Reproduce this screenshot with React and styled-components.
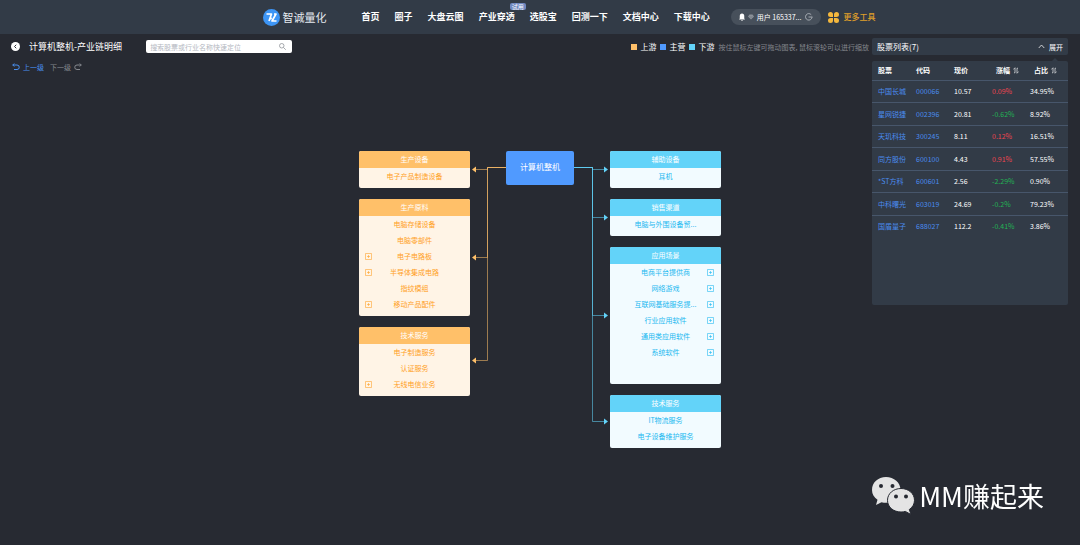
import React, { useState } from "react";
import styled, { createGlobalStyle } from "styled-components";

const GlobalStyle = createGlobalStyle`
  * {
    box-sizing: border-box;
  }

  body {
    margin: 0;
    background: #272a32;
    color: #fff;
    font-family: "Noto Sans CJK SC", sans-serif;
    font-size: 7px;
    line-height: 10px;
  }

  button,
  input {
    margin: 0;
    padding: 0;
    border: 0;
    background: none;
    color: inherit;
    font: inherit;
  }

  button {
    cursor: pointer;
  }

  a {
    color: inherit;
    text-decoration: none;
  }

  svg {
    display: block;
    flex: none;
  }
`;

const Header = styled.header`
  display: flex;
  align-items: center;
  justify-content: center;
  height: 34px;
  padding-left: 58px;
  background: #323b47;
  white-space: nowrap;
`;

const Logo = styled.a`
  display: flex;
  align-items: center;
  gap: 3px;
  margin-right: 35px;
  color: #e6eaf0;
  font-size: 11px;
  line-height: 16px;
`;

const Nav = styled.nav`
  display: flex;
  gap: 15px;
  margin-right: 21px;
`;

const NavLink = styled.a`
  position: relative;
  font-size: 9px;
  font-weight: 700;
  line-height: 14px;
`;

const Badge = styled.span`
  position: absolute;
  top: -7px;
  right: -11px;
  padding: 0 2px;
  border-radius: 2px;
  background: #7088c0;
  font-size: 6px;
  font-weight: 400;
  line-height: 7px;
`;

const UserPill = styled.button`
  display: flex;
  align-items: center;
  gap: 3px;
  height: 16px;
  padding: 0 8px;
  border-radius: 8px;
  background: #47505b;
`;

const UserName = styled.span`
  margin-right: 1px;
`;

const MoreTools = styled.a`
  display: flex;
  align-items: center;
  gap: 4px;
  margin-left: 7px;
  color: #e0a02a;
  font-size: 8px;
  font-weight: 500;
`;

const Toolbar = styled.div`
  display: flex;
  align-items: center;
  padding: 4px 12px 0 11px;
  white-space: nowrap;
`;

const BackButton = styled.button`
  width: 9px;
  height: 9px;
  border-radius: 50%;
  background: #fff;
`;

const Title = styled.h1`
  margin: 0 24px 0 9px;
  font-size: 9px;
  font-weight: 400;
  line-height: 14px;
`;

const SearchBox = styled.label`
  display: flex;
  align-items: center;
  width: 146px;
  height: 13px;
  padding: 0 6px 0 4px;
  border-radius: 2px;
  background: #fff;
`;

const SearchInput = styled.input`
  flex: 1;
  min-width: 0;
  height: 11px;
  outline: none;
  color: #333;

  &::placeholder {
    color: #b4b8bf;
    opacity: 1;
  }
`;

const Legend = styled.div`
  display: flex;
  align-items: center;
  gap: 4px;
  margin: 0 3px 0 auto;
`;

const LegendItem = styled.span`
  display: flex;
  align-items: center;
  gap: 3px;
  font-size: 8px;

  &::before {
    content: "";
    width: 6px;
    height: 6px;
    background: ${(props) => props.$color};
  }
`;

const Hint = styled.span`
  color: #83868c;
`;

const PanelHead = styled.div`
  display: flex;
  align-items: center;
  justify-content: space-between;
  width: 196px;
  height: 17px;
  padding: 0 5px;
  border-radius: 2px;
  background: #323b47;
`;

const PanelTitle = styled.h2`
  margin: 0;
  font-size: 8px;
  font-weight: 400;
`;

const ExpandButton = styled.button`
  display: flex;
  align-items: center;
  gap: 4px;
`;

const Workspace = styled.main`
  display: grid;
  grid-template-columns: 1fr auto 1fr;
  align-items: start;
  padding: 6px 12px 0;
`;

const History = styled.div`
  display: flex;
  gap: 6px;
`;

const HistoryButton = styled.button`
  display: flex;
  align-items: center;
  gap: 3px;
  height: 12px;
  color: ${(props) => (props.$active ? "#4a90f0" : "#85888e")};
`;

const Diagram = styled.div`
  display: flex;
  align-items: flex-start;
  margin-top: 90px;
`;

const Column = styled.div`
  display: flex;
  flex-direction: column;
  gap: 11px;
  width: 111px;
`;

const RootNode = styled.div`
  width: 68px;
  padding-bottom: 2px;
  border-radius: 2px;
  background: #509aff;
  font-size: 8px;
  line-height: 32px;
  text-align: center;
`;

const Card = styled.section`
  min-height: ${(props) => (props.$tall ? "137px" : "0")};
  border-radius: 2px;
  overflow: hidden;
  background: ${(props) => props.$tone.body};
  color: ${(props) => props.$tone.text};
`;

const CardTitle = styled.h3`
  margin: 0;
  background: ${(props) => props.$tone.main};
  color: #fff;
  font-size: 7px;
  font-weight: 400;
  line-height: 17px;
  text-align: center;
`;

const CardList = styled.ul`
  margin: 0;
  padding: 0 6px 4px;
  list-style: none;
`;

const CardItem = styled.li`
  display: grid;
  grid-template-columns: 8px 1fr 8px;
  align-items: center;
  height: 16px;
  text-align: center;
`;

const PlusButton = styled.button`
  grid-row: 1;
  grid-column: ${(props) => (props.$side === "left" ? 1 : 3)};
  height: 7px;
`;

const ItemName = styled.span`
  grid-row: 1;
  grid-column: 2;
`;

const StockPanel = styled.aside`
  position: relative;
  justify-self: end;
  width: 196px;
  min-height: 244px;
  border-radius: 2px;
  background: #323b47;

  &::before {
    content: "";
    position: absolute;
    top: -3px;
    right: 10px;
    border: 3px solid transparent;
    border-top: 0;
    border-bottom-color: #323b47;
  }
`;

const StockTable = styled.table`
  width: 100%;
  border-collapse: collapse;
  table-layout: fixed;
`;

const StockRow = styled.tr`
  height: 22px;
  border-top: 1px solid #47566b;

  &:nth-child(even) {
    height: 23px;
  }
`;

const Th = styled.th`
  width: ${(props) => (props.$last ? "auto" : "38px")};
  height: 19px;
  padding: 0 0 0 ${(props) => (props.$sortable ? "10px" : "6px")};
  font-weight: 700;
  text-align: left;
  white-space: nowrap;
`;

const SortButton = styled.button`
  display: flex;
  align-items: center;
  gap: 3px;
`;

const Td = styled.td`
  padding: 0 0 0 6px;
  color: ${(props) => props.$color || "#fff"};
  white-space: nowrap;
`;

const Watermark = styled.div`
  position: fixed;
  right: 36px;
  bottom: 30px;
  display: flex;
  align-items: center;
  gap: 4px;
  font-size: 27px;
  line-height: 38px;
`;

const orange = { main: "#ffc069", body: "#fff4e6", text: "#ffa024" };
const cyan = { main: "#63d3f9", body: "#f2fbff", text: "#1ab8f0" };

const navItems = [
  { name: "首页" },
  { name: "圈子" },
  { name: "大盘云图" },
  { name: "产业穿透", badge: "试用" },
  { name: "选股宝" },
  { name: "回测一下" },
  { name: "文档中心" },
  { name: "下载中心" },
];

const upstream = [
  { title: "生产设备", items: [["电子产品制造设备"]] },
  {
    title: "生产原料",
    items: [
      ["电脑存储设备"],
      ["电脑零部件"],
      ["电子电路板", true],
      ["半导体集成电路", true],
      ["指纹模组"],
      ["移动产品配件", true],
    ],
  },
  {
    title: "技术服务",
    items: [["电子制造服务"], ["认证服务"], ["无线电信业务", true]],
  },
];

const downstream = [
  { title: "辅助设备", items: [["耳机"]] },
  { title: "销售渠道", items: [["电脑与外围设备贸..."]] },
  {
    title: "应用场景",
    tall: true,
    items: [
      ["电商平台提供商", true],
      ["网络游戏", true],
      ["互联网基础服务提...", true],
      ["行业应用软件", true],
      ["通用类应用软件", true],
      ["系统软件", true],
    ],
  },
  { title: "技术服务", items: [["IT物流服务"], ["电子设备维护服务"]] },
];

const stocks = [
  ["中国长城", "000066", "10.57", "0.09%", "34.95%"],
  ["星网锐捷", "002396", "20.81", "-0.62%", "8.92%"],
  ["天玑科技", "300245", "8.11", "0.12%", "16.51%"],
  ["同方股份", "600100", "4.43", "0.91%", "57.55%"],
  ["*ST方科", "600601", "2.56", "-2.29%", "0.90%"],
  ["中科曙光", "603019", "24.69", "-0.2%", "79.23%"],
  ["国盾量子", "688027", "112.2", "-0.41%", "3.86%"],
];

function LogoIcon() {
  return (
    <svg width="17" height="17" viewBox="0 0 34 34" fill="none">
      <circle cx="17" cy="17" r="17" fill="#3d95f5" />
      <path
        d="M7 10h10l-5 14M22 10h4l-8 14h9M17 17l-2 3"
        stroke="#fff"
        strokeWidth="3.4"
        strokeLinejoin="round"
      />
    </svg>
  );
}

function BellIcon() {
  return (
    <svg width="6" height="8" viewBox="0 0 12 16" fill="#fff">
      <path d="M6 1c3 0 4.500 2 4.500 5v5l1.500 2H0l1.500-2V6C1.500 3 3 1 6 1zM4 14h4l-2 2z" />
    </svg>
  );
}

function GemIcon() {
  return (
    <svg width="6" height="6" viewBox="0 0 12 12">
      <path d="M3 1h6l3 4-6 6-6-6z" fill="#8c929a" />
      <path d="M3.500 4.500L6 7l2.500-2.500" stroke="#5b636d" fill="none" />
    </svg>
  );
}

function LogoutIcon() {
  return (
    <svg width="8" height="8" viewBox="0 0 16 16" fill="none" stroke="#c3c7cc" strokeWidth="1.500">
      <path d="M12.500 3.500a6.500 6.500 0 1 0 1.500 5M7 8h8" />
    </svg>
  );
}

function ToolsIcon() {
  return (
    <svg width="11" height="11" viewBox="0 0 22 22" fill="#f5b83d">
      <path d="M5 0a5 5 0 0 1 5 5v5H5A5 5 0 0 1 5 0zM17 0a5 5 0 0 1 0 10h-5V5a5 5 0 0 1 5-5zM5 12h5v5a5 5 0 1 1-5-5zM12 12h5a5 5 0 1 1-5 5z" />
    </svg>
  );
}

function UndoIcon({ flip }) {
  return (
    <svg width="8" height="8" viewBox="0 0 16 16" fill="none" stroke="currentColor" strokeWidth="2">
      <g transform={flip ? "translate(16 0) scale(-1 1)" : undefined}>
        <path d="M1.500 4H10a4.500 4.500 0 0 1 0 9H4M4.500 1L1.500 4l3 3" />
      </g>
    </svg>
  );
}

function SortIcon() {
  return (
    <svg width="6" height="7" viewBox="0 0 12 14" fill="none" stroke="#d4d7db" strokeWidth="1.600">
      <path d="M0.500 5L4 1.500v10M11.500 9L8 12.500v-10M2 11.500h2M8 2.500h2" />
    </svg>
  );
}

function WechatIcon() {
  return (
    <svg width="44" height="38" viewBox="0 0 44 38">
      <path
        d="M15 0C7 0 1 5.500 1 13c0 4 2 7.500 5.500 9.800L5 28l5.500-2.800c1.500.4 3 .6 4.500.6 8 0 14.500-5.300 14.500-12.800S23 0 15 0z"
        fill="#e4e4e4"
      />
      <circle cx="10" cy="9" r="2" fill="#272a32" />
      <circle cx="21.500" cy="9" r="2" fill="#272a32" />
      <path
        d="M30 11.500c-7.500 0-13.500 5-13.500 11.800S22.500 35 30 35c1.500 0 3-.2 4.300-.6L40 37.500l-1.700-5c3.200-2.200 5.200-5.400 5.200-9.200 0-6.800-6-11.800-13.500-11.800z"
        fill="#e4e4e4"
        stroke="#272a32"
        strokeWidth="1"
      />
      <circle cx="25" cy="19.500" r="2" fill="#272a32" />
      <circle cx="35" cy="19.500" r="2" fill="#272a32" />
    </svg>
  );
}

// one line per card, all leaving the root node; they get brighter where they overlap
function Links({ side, targets }) {
  const left = side === "left";
  const color = left ? orange.main : cyan.main;
  return (
    <svg width="36" height="300" viewBox="0 0 36 300" fill="none">
      <g transform={left ? undefined : "translate(36 0) scale(-1 1)"}>
        {targets.map((y) => (
          <g key={y}>
            <path d={`M36 16.500H17.500V${y}H5`} stroke={color} strokeOpacity="0.550" />
            <path d={`M2 ${y}l4-3v6z`} fill={color} />
          </g>
        ))}
      </g>
    </svg>
  );
}

function Group({ data, tone, side }) {
  return (
    <Card $tone={tone} $tall={data.tall}>
      <CardTitle $tone={tone}>{data.title}</CardTitle>
      <CardList>
        {data.items.map(([name, more]) => (
          <CardItem key={name}>
            {more && (
              <PlusButton $side={side} aria-label={`展开${name}`}>
                <svg width="7" height="7" viewBox="0 0 14 14" fill="none" stroke="currentColor" strokeOpacity="0.800">
                  <path d="M1 1h12v12H1zM4 7h6M7 4v6" strokeWidth="1.400" />
                </svg>
              </PlusButton>
            )}
            <ItemName>{name}</ItemName>
          </CardItem>
        ))}
      </CardList>
    </Card>
  );
}

export default function App() {
  const [keyword, setKeyword] = useState("");

  return (
    <>
      <GlobalStyle />
      <Header>
        <Logo href="#">
          <LogoIcon />
          智诚量化
        </Logo>
        <Nav>
          {navItems.map((item) => (
            <NavLink href="#" key={item.name}>
              {item.name}
              {item.badge && <Badge>{item.badge}</Badge>}
            </NavLink>
          ))}
        </Nav>
        <UserPill>
          <BellIcon />
          <GemIcon />
          <UserName>用户 165337...</UserName>
          <LogoutIcon />
        </UserPill>
        <MoreTools href="#">
          <ToolsIcon />
          更多工具
        </MoreTools>
      </Header>

      <Toolbar>
        <BackButton aria-label="返回">
          <svg width="9" height="9" viewBox="0 0 18 18" fill="none" stroke="#272a32" strokeWidth="2">
            <path d="M10.500 5.500L7 9l3.500 3.500" />
          </svg>
        </BackButton>
        <Title>计算机整机-产业链明细</Title>
        <SearchBox>
          <SearchInput
            aria-label="搜索"
            placeholder="搜索股票或行业名称快速定位"
            value={keyword}
            onChange={(e) => setKeyword(e.target.value)}
          />
          <svg width="7" height="7" viewBox="0 0 14 14" fill="none" stroke="#8a8d93" strokeWidth="1.500">
            <circle cx="5.500" cy="5.500" r="4.500" />
            <path d="M9 9l4.500 4.500" />
          </svg>
        </SearchBox>
        <Legend>
          <LegendItem $color="#ffc069">上游</LegendItem>
          <LegendItem $color="#509aff">主营</LegendItem>
          <LegendItem $color="#63d3f9">下游</LegendItem>
          <Hint>按住鼠标左键可拖动图表, 鼠标滚轮可以进行缩放</Hint>
        </Legend>
        <PanelHead>
          <PanelTitle>股票列表(7)</PanelTitle>
          <ExpandButton>
            <svg width="7" height="7" viewBox="0 0 14 14" fill="none" stroke="#fff" strokeWidth="1.500">
              <path d="M1.500 10L7 4l5.500 6" />
            </svg>
            展开
          </ExpandButton>
        </PanelHead>
      </Toolbar>

      <Workspace>
        <History>
          <HistoryButton $active>
            <UndoIcon />
            上一级
          </HistoryButton>
          <HistoryButton>
            下一级
            <UndoIcon flip />
          </HistoryButton>
        </History>

        <Diagram>
          <Column>
            {upstream.map((g) => (
              <Group key={g.title} data={g} tone={orange} side="left" />
            ))}
          </Column>
          <Links side="left" targets={[18.5, 106.5, 209.5]} />
          <RootNode>计算机整机</RootNode>
          <Links side="right" targets={[18.5, 66.5, 164.5, 270.5]} />
          <Column>
            {downstream.map((g) => (
              <Group key={g.title} data={g} tone={cyan} side="right" />
            ))}
          </Column>
        </Diagram>

        <StockPanel>
          <StockTable>
            <thead>
              <tr>
                <Th>股票</Th>
                <Th>代码</Th>
                <Th>现价</Th>
                <Th $sortable>
                  <SortButton>
                    涨幅
                    <SortIcon />
                  </SortButton>
                </Th>
                <Th $sortable $last>
                  <SortButton>
                    占比
                    <SortIcon />
                  </SortButton>
                </Th>
              </tr>
            </thead>
            <tbody>
              {stocks.map(([name, code, price, change, ratio]) => (
                <StockRow key={code}>
                  <Td $color="#4a8cf0">
                    <a href="#">{name}</a>
                  </Td>
                  <Td $color="#4a8cf0">
                    <a href="#">{code}</a>
                  </Td>
                  <Td>{price}</Td>
                  <Td $color={change.startsWith("-") ? "#22b455" : "#f04550"}>{change}</Td>
                  <Td>{ratio}</Td>
                </StockRow>
              ))}
            </tbody>
          </StockTable>
        </StockPanel>
      </Workspace>

      <Watermark>
        <WechatIcon />
        MM赚起来
      </Watermark>
    </>
  );
}
